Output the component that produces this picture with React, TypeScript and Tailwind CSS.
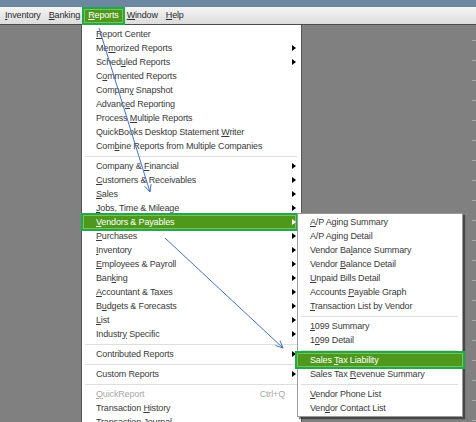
import React from "react";

type Item =
  | { sep: true }
  | {
      sep?: false;
      label: string;
      arrow?: boolean;
      active?: boolean;
      disabled?: boolean;
      shortcut?: string;
    };

// "_" marks the mnemonic letter that gets underlined
function Label({ text }: { text: string }) {
  const i = text.indexOf("_");
  if (i < 0) return <span className="whitespace-pre">{text}</span>;
  return (
    <span className="whitespace-pre">
      {text.slice(0, i)}
      <span className="underline decoration-1 underline-offset-[1px]">{text[i + 1]}</span>
      {text.slice(i + 2)}
    </span>
  );
}

const mainItems: Item[] = [
  { label: "_Report Center" },
  { label: "Me_morized Reports", arrow: true },
  { label: "Sched_uled Reports", arrow: true },
  { label: "C_ommented Reports" },
  { label: "Compan_y Snapshot" },
  { label: "Advanc_ed Reporting" },
  { label: "Process _Multiple Reports" },
  { label: "QuickBooks Desktop Statement _Writer" },
  { label: "Com_bine Reports from Multiple Companies" },
  { sep: true },
  { label: "Company & _Financial", arrow: true },
  { label: "_Customers & Receivables", arrow: true },
  { label: "_Sales", arrow: true },
  { label: "_Jobs, Time & Mileage", arrow: true },
  { label: "_Vendors & Payables", arrow: true, active: true },
  { label: "_Purchases", arrow: true },
  { label: "_Inventory", arrow: true },
  { label: "_Employees & Payroll", arrow: true },
  { label: "Ban_king", arrow: true },
  { label: "_Accountant & Taxes", arrow: true },
  { label: "B_udgets & Forecasts", arrow: true },
  { label: "_List", arrow: true },
  { label: "Industr_y Specific", arrow: true },
  { sep: true },
  { label: "Contributed Reports", arrow: true },
  { sep: true },
  { label: "Custom Reports", arrow: true },
  { sep: true },
  { label: "_QuickReport", disabled: true, shortcut: "Ctrl+Q" },
  { label: "Transaction _History" },
  { label: "Transaction _Journal" },
];

const vendorItems: Item[] = [
  { label: "_A/P Aging Summary" },
  { label: "A/P A_ging Detail" },
  { label: "Vendor Ba_lance Summary" },
  { label: "Vendor _Balance Detail" },
  { label: "_Unpaid Bills Detail" },
  { label: "Accounts _Payable Graph" },
  { label: "_Transaction List by Vendor" },
  { sep: true },
  { label: "_1099 Summary" },
  { label: "1_099 Detail" },
  { sep: true },
  { label: "Sales _Tax Liability", active: true },
  { label: "Sales Tax _Revenue Summary" },
  { sep: true },
  { label: "_Vendor Phone List" },
  { label: "Ven_dor Contact List" },
];

function Arrow({ white }: { white?: boolean }) {
  return (
    <span
      className={
        "inline-block w-0 h-0 border-y-[3px] border-y-transparent border-l-[4px] " +
        (white ? "border-l-white" : "border-l-black")
      }
    />
  );
}

function MenuList({
  items,
  padLeft,
  highlight,
}: {
  items: Item[];
  padLeft: string;
  highlight: string;
}) {
  return (
    <>
      {items.map((it, idx) => {
        if (it.sep) {
          return (
            <div key={idx} className="h-[6px] flex items-center pl-[3px] pr-[4px]">
              <div className="h-px w-full bg-[#dedede]" />
            </div>
          );
        }
        return (
          <div
            key={idx}
            className={
              "relative h-[14px] flex items-center justify-between pr-[5px] " +
              padLeft +
              (it.active ? " text-white" : it.disabled ? " text-[#a8a8a8]" : " text-[#3a3a3a]")
            }
          >
            {it.active && (
              <div
                className={
                  "absolute -top-[2px] -bottom-[2px] border-2 border-[#1cac47] bg-[#4e991b] shadow-[inset_0_0_0_1px_#86bd5c] " +
                  highlight
                }
              />
            )}
            <span className="relative">
              <Label text={it.label} />
            </span>
            {it.arrow && (
              <span className="relative flex items-center">
                <Arrow white={it.active} />
              </span>
            )}
            {it.shortcut && <span className="relative pr-[11px]">{it.shortcut}</span>}
          </div>
        );
      })}
    </>
  );
}

const barItems = ["_Inventory", "_Banking", "_Reports", "_Window", "_Help"];

export default function App() {
  return (
    <div
      className="relative w-[476px] h-[422px] overflow-hidden bg-[#808080] text-[9px] tracking-[-0.15px] leading-none"
      style={{ fontFamily: '"Liberation Sans", Arial, sans-serif' }}
    >
      {/* title strip */}
      <div className="h-[7px] bg-[#6b88a0]" />
      {/* menu bar */}
      <div className="h-[18px] flex items-center pl-[1px] bg-gradient-to-b from-[#f5f5f5] to-[#dcdcdc] border-b border-[#4d4d4d] text-[#2b2b2b]">
        {barItems.map((b) => {
          const on = b === "_Reports";
          return (
            <span key={b} className={"relative px-[4px] " + (on ? "text-white" : "")}>
              {on && (
                <span className="absolute -left-[2px] -right-[2px] -top-[4px] -bottom-[5px] border-2 border-[#1cac47] bg-[#4e991b] shadow-[inset_0_0_0_1px_#86bd5c]" />
              )}
              <span className="relative">
                <Label text={b} />
              </span>
            </span>
          );
        })}
      </div>

      {/* right edge ruler ticks */}
      <div className="absolute right-0 top-[25px] w-[4px] flex flex-col">
        <div className="h-[16px] border-b border-[#a9a9a9]" />
        {Array.from({ length: 19 }).map((_, i) => (
          <div key={i} className="h-[20px] border-b border-[#a9a9a9]" />
        ))}
      </div>

      {/* Reports dropdown */}
      <div className="absolute left-[81px] top-[25px] w-[221px] h-[420px] bg-white border-x border-[#555] pt-[2px]">
        <MenuList items={mainItems} padLeft="pl-[14px]" highlight="-left-[1px] right-[3px]" />
      </div>

      {/* Vendors & Payables submenu */}
      <div className="absolute left-[297px] top-[213px] w-[166px] bg-white border border-[#9a9a9a] shadow-[2px_2px_1px_rgba(0,0,0,0.45)] py-[1px]">
        <MenuList items={vendorItems} padLeft="pl-[12px]" highlight="-left-[3px] -right-[3px]" />
      </div>

      {/* pointer arrows */}
      <svg
        className="absolute inset-0 pointer-events-none"
        width="476"
        height="422"
        viewBox="0 0 476 422"
        fill="none"
        stroke="#4472c4"
        strokeWidth="1"
      >
        <line x1="99" y1="28" x2="150" y2="192" />
        <polyline points="151.1,184.1 150,192 144.6,186.1" />
        <line x1="165" y1="238" x2="283" y2="348" />
        <polyline points="280,340.6 283,348 275.4,345.5" />
      </svg>
    </div>
  );
}
